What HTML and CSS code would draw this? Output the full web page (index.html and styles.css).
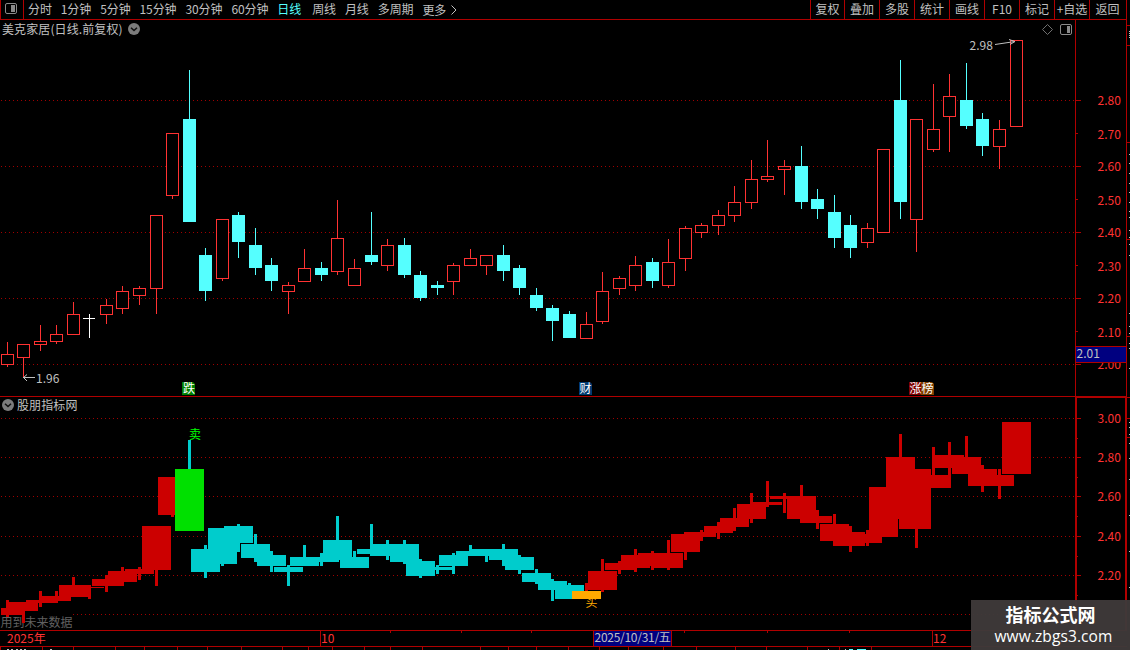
FILE: index.html
```html
<!DOCTYPE html>
<html lang="zh-CN">
<head>
  <meta charset="UTF-8">
  <title>美克家居 日线</title>
  <link rel="stylesheet" href="styles.css">
</head>
<body>
  <div class="app">
    <div class="main">
      <div class="toolbar">
        <div class="layout-btn">
          <svg width="14" height="13" viewBox="0 0 14 13">
            <rect x="1.5" y="1.5" width="11" height="10" rx="1.5" fill="none" stroke="#8a8a8a"></rect>
            <rect x="7" y="3" width="4" height="7" fill="#8a8a8a"></rect>
          </svg>
        </div>
        <div class="periods">
          <span>分时</span>
          <span>1分钟</span>
          <span>5分钟</span>
          <span>15分钟</span>
          <span>30分钟</span>
          <span>60分钟</span>
          <span class="active">日线</span>
          <span>周线</span>
          <span>月线</span>
          <span>多周期</span>
          <span class="more">更多
            <svg width="6" height="10" viewBox="0 0 6 10"><path d="M0.5 0.5L5 5L0.5 9.5" fill="none" stroke="#c0c0c0"></path></svg>
          </span>
        </div>
        <div class="tools">
          <span class="first">复权</span>
          <span>叠加</span>
          <span>多股</span>
          <span>统计</span>
          <span>画线</span>
          <span>F10</span>
          <span>标记</span>
          <span>+自选</span>
          <span class="last">返回</span>
        </div>
      </div>

      <div class="panel">
        <div class="panel-title">
          <span>美克家居(日线.前复权)</span>
          <svg width="12" height="12" viewBox="0 0 12 12">
            <circle cx="6" cy="6" r="6" fill="#7c7c7c"></circle>
            <path d="M3 4.7L6 7.5L9 4.7" fill="none" stroke="#101010" stroke-width="1.5"></path>
          </svg>
        </div>
        <div class="panel-icons">
          <svg width="12" height="12" viewBox="0 0 12 12"><path d="M6.5 0.5L11.5 5.5L6.5 10.5L1.5 5.5Z" fill="none" stroke="#707070"></path></svg>
          <svg width="12" height="12" viewBox="0 0 12 12">
            <rect x="0.5" y="0.5" width="11" height="10" rx="1.5" fill="none" stroke="#8a8a8a"></rect>
            <rect x="7" y="2" width="3" height="7" fill="#8a8a8a"></rect>
          </svg>
        </div>
        <svg class="plot" width="1075" height="376" viewBox="0 20 1075 376">
          <path class="grid" d="M1 100.5H1075M1 166.5H1075M1 232.5H1075M1 298.5H1075M1 364.5H1075"></path>
          <g id="candles"></g>
          <g class="note">
            <text x="36" y="383">1.96</text>
            <path d="M23 377.5H35M27 374.5L23.5 377.5L27 381"></path>
            <text x="969.5" y="50">2.98</text>
            <path d="M995 44.5L1015 41.5M1009 39.5L1015 41.5L1010 44.5"></path>
          </g>
          <g class="tags">
            <path fill="#008000" d="M182 382H193L195 384V395H182Z"></path>
            <text x="183" y="393">跌</text>
            <path fill="#003a70" d="M579 382H590L592 384V395H579Z"></path>
            <text x="579.5" y="393">财</text>
            <path fill="#800000" d="M909 382H921V395H909Z"></path>
            <path fill="#804000" d="M921 382H932L934 384V395H921Z"></path>
            <text x="909.5" y="393">涨</text>
            <text x="921.5" y="393">榜</text>
          </g>
        </svg>
        <svg class="axis" width="52" height="376" viewBox="1075 20 52 376">
          <path class="frame" d="M1075.5 20V396M1126.5 20V396"></path>
          <path class="frame" d="M1075 100.5H1081M1075 166.5H1081M1075 232.5H1081M1075 298.5H1081M1075 364.5H1081"></path>
          <path class="frame" d="M1075 133.5H1078M1075 199.5H1078M1075 265.5H1078M1075 331.5H1078"></path>
          <g class="price">
            <text x="1097.5" y="105">2.80</text>
            <text x="1097.5" y="139">2.70</text>
            <text x="1097.5" y="171">2.60</text>
            <text x="1097.5" y="205">2.50</text>
            <text x="1097.5" y="237">2.40</text>
            <text x="1097.5" y="271">2.30</text>
            <text x="1097.5" y="303">2.20</text>
            <text x="1097.5" y="337">2.10</text>
            <text x="1097.5" y="369">2.00</text>
          </g>
          <rect x="1076" y="347" width="50" height="15" fill="#000080"></rect>
          <path class="frame" d="M1075 346.5H1127M1075 362.5H1127"></path>
          <text class="cursor-price" x="1076.5" y="358">2.01</text>
        </svg>
      </div>

      <div class="panel indicator">
        <div class="panel-title">
          <svg width="12" height="12" viewBox="0 0 12 12">
            <circle cx="6" cy="6" r="6" fill="#7c7c7c"></circle>
            <path d="M3 4.7L6 7.5L9 4.7" fill="none" stroke="#101010" stroke-width="1.5"></path>
          </svg>
          <span>股朋指标网</span>
        </div>
        <svg class="plot" width="1075" height="234" viewBox="0 396 1075 234">
          <path class="frame" d="M0 396.5H1075"></path>
          <path class="grid" d="M1 418.5H1075M1 457.5H1075M1 496.5H1075M1 536.5H1075M1 575.5H1075M73 614.5H1075"></path>
          <text class="future" x="0.5" y="627">用到未来数据</text>
          <text class="sell" x="189" y="439">卖</text>
          <text class="buy" x="585.5" y="607">买</text>
          <g id="bands"></g>
        </svg>
        <svg class="axis" width="52" height="234" viewBox="1075 396 52 234">
          <path class="frame thick" d="M1076 397H1126V630M1076 396V630"></path>
          <path class="frame" d="M1077 418.5H1081M1077 457.5H1081M1077 496.5H1081M1077 536.5H1081M1077 575.5H1081M1077 614.5H1081"></path>
          <path class="frame" d="M1077 438.5H1078M1077 477.5H1078M1077 516.5H1078M1077 556.5H1078M1077 595.5H1078"></path>
          <g class="price">
            <text x="1097.5" y="423">3.00</text>
            <text x="1097.5" y="462">2.80</text>
            <text x="1097.5" y="501">2.60</text>
            <text x="1097.5" y="541">2.40</text>
            <text x="1097.5" y="580">2.20</text>
          </g>
        </svg>
      </div>

      <svg class="dates" width="1127" height="20" viewBox="0 630 1127 20">
        <path class="frame" d="M0 630.5H1127M0 646.5H1127M320.5 630V646M932.5 630V646"></path>
        <g id="dateTicks"></g>
        <g class="price">
          <text x="7" y="643">2025年</text>
          <text x="321" y="643">10</text>
          <text x="933" y="643">12</text>
        </g>
        <rect x="594" y="631" width="77" height="15" fill="#000080"></rect>
        <path class="frame" d="M593.5 630V646M671.5 630V646"></path>
        <text class="cursor-date" x="594.5" y="642">2025/10/31/五</text>
        <path stroke="#c0c0c0" d="M7 649.5H9M11 649.5H13M16 649.5H18M20 649.5H22M24 649.5H26M50 649.5H52M828 649.5H829M845 649.5H846"></path>
        <path stroke="#55ffff" d="M849 649.5H853M857 649.5H866"></path>
      </svg>
    </div>

    <svg class="strip" width="3" height="650" viewBox="1127 0 3 650">
      <path class="frame" d="M1127 25.5H1130M1127 45.5H1130M1127 142.5H1130M1127 239.5H1130M1127 336.5H1130M1127 397.5H1130M1127 418.5H1130M1127 437.5H1130"></path>
      <g id="stripMarks"></g>
    </svg>

    <div class="brand">
      <div class="brand-name">指标公式网</div>
      <div class="brand-url">www.zbgs3.com</div>
    </div>
  </div>

  <script src="chart.js"></script>
</body>
</html>
```

FILE: styles.css
```css
* {
  box-sizing: border-box;
  margin: 0;
  padding: 0;
}

body {
  width: 1130px;
  height: 650px;
  overflow: hidden;
  background-color: #000;
  color: #c0c0c0;
  font-family: "Noto Sans CJK SC", "Liberation Sans", sans-serif;
  font-size: 12px;
}

svg {
  display: block;
  flex: none;
}

.app {
  display: flex;
  position: relative;
  width: 1130px;
  height: 650px;
}

.main {
  display: flex;
  flex-direction: column;
  width: 1127px;
}

.toolbar {
  display: flex;
  height: 20px;
  border: 1px solid #b00000;
  border-top: none;
  line-height: 18px;
  white-space: nowrap;
}

.layout-btn {
  width: 23px;
  padding: 2px 0 0 3px;
  border-right: 1px solid #b00000;
}

.periods {
  display: flex;
  gap: 9px;
  padding-left: 4px;
  letter-spacing: -0.1px;
}

.periods .active {
  margin-right: 2px;
  color: #55ffff;
}

.more {
  display: flex;
  align-items: center;
  gap: 5px;
}

.tools {
  display: flex;
  margin-left: auto;
}

.tools span {
  width: 35px;
  border-left: 1px solid #b00000;
  text-align: center;
}

.tools .first {
  width: 34px;
}

.tools .last {
  width: 37px;
  padding-right: 1px;
}

.panel {
  display: flex;
  position: relative;
  height: 376px;
}

.indicator {
  height: 234px;
}

.panel-title {
  display: flex;
  align-items: center;
  gap: 5px;
  position: absolute;
  left: 2px;
  top: 0;
  height: 18px;
  letter-spacing: 0.1px;
  white-space: nowrap;
}

.panel-title span {
  line-height: 18px;
}

.indicator .panel-title {
  gap: 3px;
}

.panel-icons {
  display: flex;
  gap: 7px;
  position: absolute;
  left: 1041px;
  top: 4px;
}

.dates {
  overflow: visible;
}

.frame {
  fill: none;
  stroke: #b00000;
  stroke-width: 1;
}

.thick {
  stroke-width: 2;
}

.grid {
  fill: none;
  stroke: #a00000;
  stroke-dasharray: 1 3;
}

.up {
  fill: #000;
  stroke: #ff3232;
}

.up-wick {
  fill: #ff3232;
}

.down,
.down-wick {
  fill: #55ffff;
}

.flat,
.flat-wick {
  fill: #fff;
}

.note {
  fill: #c0c0c0;
}

.note path {
  fill: none;
  stroke: #c0c0c0;
}

.tags text {
  fill: #fff;
}

.price {
  fill: #ff3232;
}

.cursor-price,
.cursor-date {
  fill: #c0c0c0;
}

.cursor-date {
  letter-spacing: -0.28px;
}

.future {
  fill: #606060;
}

.sell {
  fill: #00ff00;
}

.buy {
  fill: #ffaa00;
}

.brand {
  position: absolute;
  left: 971px;
  top: 600px;
  width: 159px;
  height: 50px;
  padding-top: 2px;
  background-color: rgba(62, 57, 57, 0.97);
  color: #fff;
  text-align: center;
  white-space: nowrap;
}

.brand-name {
  font-size: 18px;
  font-weight: 700;
  line-height: 24px;
}

.brand-url {
  padding-left: 6px;
  font-family: "Open Sans", sans-serif;
  font-size: 15.5px;
  line-height: 21px;
  letter-spacing: 0.1px;
}
```

FILE: chart.js
```javascript
// [center x, high, body top, body bottom, low, kind]
// kind: u = up, d = down, f = flat
const bars = [
  [7, 342, 354, 365, 367, 'u'],
  [23, 344, 344, 358, 378, 'u'],
  [40, 325, 341, 345, 351, 'u'],
  [56, 325, 334, 342, 344, 'u'],
  [73, 302, 314, 335, 335, 'u'],
  [89, 314, 318, 319, 338, 'f'],
  [106, 299, 305, 315, 324, 'u'],
  [122, 286, 291, 309, 314, 'u'],
  [139, 286, 288, 296, 305, 'u'],
  [156, 215, 215, 289, 314, 'u'],
  [172, 133, 133, 196, 199, 'u'],
  [189, 70, 119, 222, 222, 'd'],
  [205, 248, 255, 291, 301, 'd'],
  [222, 219, 219, 279, 281, 'u'],
  [238, 212, 215, 242, 258, 'd'],
  [255, 228, 245, 268, 275, 'd'],
  [271, 258, 265, 281, 291, 'd'],
  [288, 282, 285, 292, 314, 'u'],
  [304, 249, 268, 282, 282, 'u'],
  [321, 262, 268, 275, 281, 'd'],
  [337, 200, 238, 272, 275, 'u'],
  [354, 259, 268, 286, 286, 'u'],
  [371, 212, 255, 262, 265, 'd'],
  [387, 239, 245, 266, 271, 'u'],
  [404, 238, 245, 275, 278, 'd'],
  [420, 271, 275, 298, 301, 'd'],
  [437, 281, 285, 288, 295, 'd'],
  [453, 263, 265, 282, 295, 'u'],
  [470, 249, 258, 266, 266, 'u'],
  [486, 255, 255, 266, 275, 'u'],
  [503, 245, 255, 271, 281, 'd'],
  [519, 265, 268, 288, 295, 'd'],
  [536, 288, 295, 308, 311, 'd'],
  [552, 305, 308, 321, 341, 'd'],
  [569, 311, 314, 338, 338, 'd'],
  [586, 312, 324, 339, 339, 'u'],
  [602, 272, 291, 322, 324, 'u'],
  [619, 276, 278, 289, 295, 'u'],
  [635, 256, 265, 286, 291, 'u'],
  [652, 258, 262, 281, 288, 'd'],
  [668, 239, 262, 286, 288, 'u'],
  [685, 226, 228, 259, 271, 'u'],
  [701, 223, 225, 233, 238, 'u'],
  [718, 210, 215, 226, 235, 'u'],
  [734, 186, 202, 216, 222, 'u'],
  [751, 160, 179, 203, 209, 'u'],
  [767, 140, 176, 180, 182, 'u'],
  [784, 160, 166, 170, 195, 'u'],
  [801, 146, 166, 202, 209, 'd'],
  [817, 189, 199, 209, 219, 'd'],
  [834, 195, 212, 238, 248, 'd'],
  [850, 215, 225, 248, 258, 'd'],
  [867, 223, 228, 243, 248, 'u'],
  [883, 149, 149, 233, 233, 'u'],
  [900, 60, 100, 202, 219, 'd'],
  [916, 119, 119, 220, 252, 'u'],
  [933, 84, 129, 150, 152, 'u'],
  [949, 74, 96, 117, 152, 'u'],
  [966, 63, 100, 126, 129, 'd'],
  [982, 113, 119, 146, 156, 'd'],
  [999, 120, 129, 147, 169, 'u'],
  [1016, 40, 40, 127, 127, 'u']
];

const SELL = 11;
const BUY = 35;
const names = { u: 'up', d: 'down', f: 'flat' };

function rect(parent, x, y, w, h, attrs) {
  const el = document.createElementNS('http://www.w3.org/2000/svg', 'rect');
  const all = Object.assign({ x: x, y: y, width: w, height: h }, attrs);
  for (const key in all) {
    el.setAttribute(key, all[key]);
  }
  parent.appendChild(el);
}

// main chart y -> price -> indicator y
function lowerY(y) {
  const price = Math.round((2.8 - (y - 100) / 330) * 100) / 100;
  return Math.round(418 + (3 - price) * 196.15);
}

const candles = document.getElementById('candles');
const bands = document.getElementById('bands');

bars.forEach(function (bar, i) {
  const [x, high, top, bottom, low, kind] = bar;
  const name = names[kind];

  rect(candles, x, high, 1, low - high, { class: name + '-wick' });
  if (kind === 'u') {
    rect(candles, x - 5.5, top + 0.5, 12, bottom - top - 1, { class: name });
  } else {
    rect(candles, x - 6, top, kind === 'f' ? 12 : 13, bottom - top, { class: name });
  }

  const trend = i < SELL || i >= BUY ? '#cc0000' : '#00cccc';
  let body = trend;
  if (i === SELL) body = '#00e000';
  if (i === BUY) body = '#ffaa00';

  const h = lowerY(high);
  const t = lowerY(top);
  const left = Math.max(x - 14, 1);
  rect(bands, x - 1, h, 3, lowerY(low - 1) + 1 - h, { fill: trend });
  rect(bands, left, t, x + 15 - left, lowerY(bottom - 1) + 1 - t, { fill: body });
});

const dateTicks = document.getElementById('dateTicks');
[390, 461, 531, 684, 767, 849].forEach(function (x) {
  rect(dateTicks, x, 631, 1, 2, { fill: '#b00000' });
});
[0, 42, 73, 115, 144, 177, 207, 241, 282, 308, 332, 364, 390, 422, 480, 508, 536, 568,
  599, 628, 663, 696, 735, 766, 807, 839, 871].forEach(function (x) {
  rect(dateTicks, x, 647, 1, 3, { fill: '#b00000' });
});

const stripMarks = document.getElementById('stripMarks');
[31, 33, 35, 37, 154, 163, 173, 183, 192, 202, 211, 217, 230, 237, 244, 255, 313, 326, 333,
  343, 348, 368, 422, 427, 434, 443, 458, 479, 515, 551, 587].forEach(function (y) {
  rect(stripMarks, 1129, y, 1, 1, { fill: '#c0c0c0' });
});
```
